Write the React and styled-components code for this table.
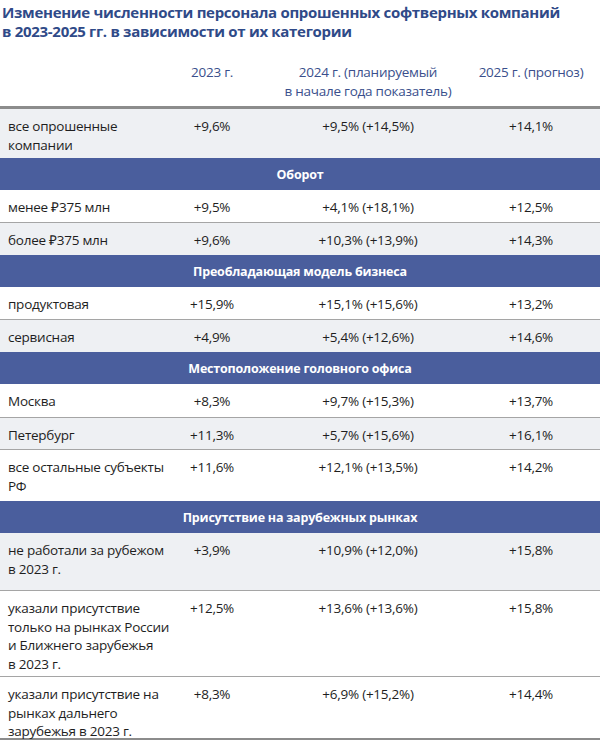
import React from 'react'
import styled, { createGlobalStyle } from 'styled-components'

const GlobalStyle = createGlobalStyle`
 html, body {
  margin: 0;
  padding: 0;
  background: #ffffff;
 }
 body {
  font-family: "Open Sans", "Liberation Sans", sans-serif;
 }
`

// h = row height in px (the source table has uneven rows)
const rows = [
 { type: 'row', h: 49, label: ['все опрошенные', 'компании'], v: ['+9,6%', '+9,5% (+14,5%)', '+14,1%'], gray: true },
 { type: 'section', title: 'Оборот' },
 { type: 'row', h: 33, label: ['менее ₽375 млн'], v: ['+9,5%', '+4,1% (+18,1%)', '+12,5%'] },
 { type: 'row', h: 32, label: ['более ₽375 млн'], v: ['+9,6%', '+10,3% (+13,9%)', '+14,3%'], gray: true },
 { type: 'section', title: 'Преобладающая модель бизнеса' },
 { type: 'row', h: 33, label: ['продуктовая'], v: ['+15,9%', '+15,1% (+15,6%)', '+13,2%'] },
 { type: 'row', h: 32, label: ['сервисная'], v: ['+4,9%', '+5,4% (+12,6%)', '+14,6%'], gray: true },
 { type: 'section', title: 'Местоположение головного офиса' },
 { type: 'row', h: 34, label: ['Москва'], v: ['+8,3%', '+9,7% (+15,3%)', '+13,7%'] },
 { type: 'row', h: 32, label: ['Петербург'], v: ['+11,3%', '+5,7% (+15,6%)', '+16,1%'], gray: true },
 { type: 'row', h: 51, label: ['все остальные субъекты', 'РФ'], v: ['+11,6%', '+12,1% (+13,5%)', '+14,2%'] },
 { type: 'section', title: 'Присутствие на зарубежных рынках' },
 { type: 'row', h: 58, label: ['не работали за рубежом', 'в 2023 г.'], v: ['+3,9%', '+10,9% (+12,0%)', '+15,8%'], gray: true },
 { type: 'row', h: 86, label: ['указали присутствие', 'только на рынках России', 'и Ближнего зарубежья', 'в 2023 г.'], v: ['+12,5%', '+13,6% (+13,6%)', '+15,8%'] },
 { type: 'row', h: 64, label: ['указали присутствие на', 'рынках дальнего', 'зарубежья в 2023 г.'], v: ['+8,3%', '+6,9% (+15,2%)', '+14,4%'], last: true },
]

export default function App() {
 return (
  <>
   <GlobalStyle />
   <Page>
    <Title>
     Изменение численности персонала опрошенных софтверных компаний
     <br />
     в 2023-2025 гг. в зависимости от их категории
    </Title>
    <HeaderRow>
     <span />
     <Cell>2023 г.</Cell>
     <Cell>
      <HeadText>
       2024 г. (планируемый
       <br />
       в начале года показатель)
      </HeadText>
     </Cell>
     <Cell>2025 г. (прогноз)</Cell>
    </HeaderRow>
    <Table>
     {rows.map((r, i) => {
      if (r.type === 'section') {
       return <Section key={i}>{r.title}</Section>
      }
      const next = rows[i + 1]
      const border = r.last ? 'thick' : next && next.type === 'row' ? 'thin' : 'none'
      return (
       <Row key={i} $gray={r.gray} $border={border} $h={r.h}>
        <Label>
         {r.label.map((l, j) => (
          <div key={j}>{l}</div>
         ))}
        </Label>
        {r.v.map((v, j) => (
         <Cell key={j}>{v}</Cell>
        ))}
        <span />
       </Row>
      )
     })}
    </Table>
   </Page>
  </>
 )
}

const Page = styled.div`
 width: 600px;
 height: 740px;
 overflow: hidden;
 color: #1e1e1e;
`

const Title = styled.h1`
 margin: 0;
 padding: 3px 0 0 2px;
 font-size: 15px;
 line-height: 19px;
 font-weight: 700;
 color: #2f4a88;
 letter-spacing: -0.3px;
 white-space: nowrap;
`

const columns = '170px 84px 228px 98px 1fr'

const HeaderRow = styled.div`
 display: grid;
 grid-template-columns: ${columns};
 margin-top: 22px;
 padding-bottom: 5px;
 border-bottom: 3px solid #8c8c8c;
 color: #3a4f8c;
 font-size: 13.5px;
 letter-spacing: -0.25px;
 line-height: 19px;
`

const Cell = styled.div`
 display: flex;
 justify-content: center;
 white-space: nowrap;
`

const HeadText = styled.div`
 text-align: center;
`

const Table = styled.div`
 display: flex;
 flex-direction: column;
`

const Section = styled.div`
 height: 32px;
 display: flex;
 align-items: center;
 justify-content: center;
 background: #4a5e9d;
 color: #ffffff;
 font-weight: 700;
 font-size: 12.5px;
 letter-spacing: -0.2px;
`

const Row = styled.div`
 box-sizing: border-box;
 height: ${p => p.$h}px;
 display: grid;
 grid-template-columns: ${columns};
 align-items: start;
 padding-top: 8px;
 background: ${p => (p.$gray ? '#eef0f3' : '#ffffff')};
 border-bottom: ${p =>
  p.$border === 'thick' ? '3px solid #8c8c8c' : p.$border === 'thin' ? '1px solid #a5a5a5' : 'none'};
 font-size: 13.5px;
 letter-spacing: -0.25px;
 line-height: 18.5px;
`

const Label = styled.div`
 padding-left: 8px;
 white-space: nowrap;
`
